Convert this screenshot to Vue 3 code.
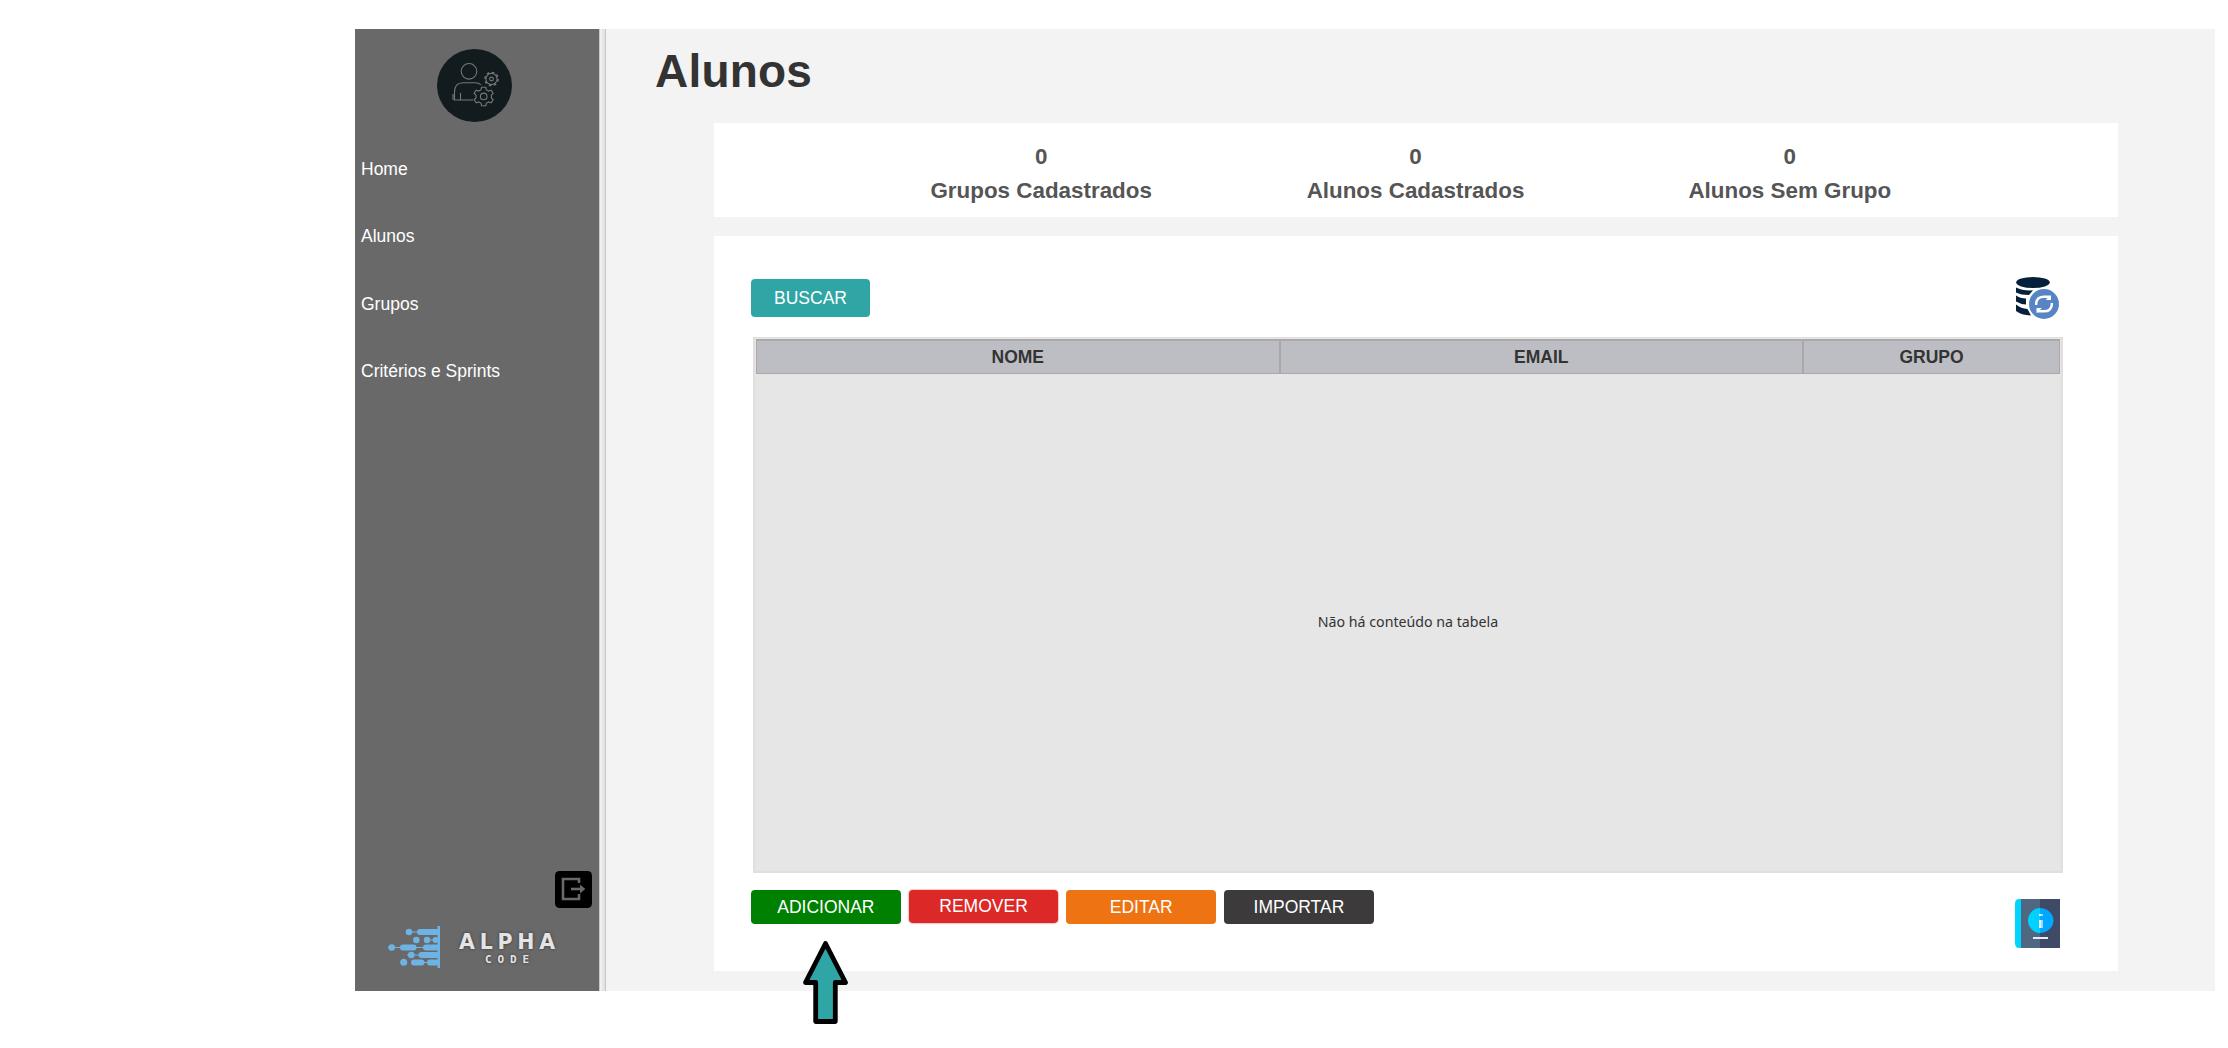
<script setup>
const menu = ['Home', 'Alunos', 'Grupos', 'Critérios e Sprints']
const stats = [
  { value: 0, label: 'Grupos Cadastrados' },
  { value: 0, label: 'Alunos Cadastrados' },
  { value: 0, label: 'Alunos Sem Grupo' },
]
const actions = [
  { label: 'ADICIONAR', kind: 'add' },
  { label: 'REMOVER', kind: 'remove' },
  { label: 'EDITAR', kind: 'edit' },
  { label: 'IMPORTAR', kind: 'import' },
]
</script>

<template>
  <div class="screen">
    <div class="app">
      <aside class="sidebar">
        <svg class="avatar" width="75" height="73" viewBox="0 0 75 73">
          <ellipse cx="37.5" cy="36.5" rx="37.5" ry="36.5" fill="#121b1e" />
          <g fill="none" stroke="#74797a" stroke-width="1.1">
            <circle cx="32" cy="22.3" r="7.8" />
            <path d="M44 36 Q42 33.8 38 33.8 H26 Q17.5 34 17.5 43 V51 H36 M23.5 44 V51 M16 45 V51" />
            <circle cx="54.5" cy="30" r="5.6" />
            <circle cx="54.5" cy="30" r="6.6" stroke-dasharray="2.6 2.6" stroke-width="1.5" />
            <circle cx="54.5" cy="30" r="1.9" />
            <path d="M44.6 38.3h4.2l.6 2.6 2.4 1.2 2.4-1 2 3.3-1.8 1.6v3l1.8 1.6-2 3.3-2.4-1-2.4 1.2-.6 2.6h-4.2l-.7-2.6-2.4-1.2-2.3 1-2.1-3.3 1.9-1.6v-3l-1.9-1.6 2.1-3.3 2.3 1 2.4-1.2z" />
            <circle cx="46.7" cy="47.4" r="3.3" />
          </g>
        </svg>
        <nav class="menu">
          <a v-for="item in menu" :key="item" class="menu-item">{{ item }}</a>
        </nav>
        <svg class="exit" width="37" height="37" viewBox="0 0 37 37">
          <rect width="37" height="37" rx="4.5" />
          <g fill="none" stroke="#696969" stroke-width="2.6">
            <path d="M24 12V8H8V28H24V23" />
            <path d="M16 18H28" />
          </g>
          <path d="M25 13.5L30.3 18L25 22.5Z" fill="#696969" />
        </svg>
        <div class="brand">
          <svg class="brand-mark" width="54" height="44" viewBox="0 0 54 44">
            <g fill="#6db4e4" stroke="#6db4e4">
              <path d="M22 7H50M37 15H50M1 22.5H52M20 30H50M26 37.5H50" stroke-width="1" />
              <rect x="50.5" y="1" width="2.5" height="42" stroke="none" />
              <path d="M33 7H50M16 22.500H26.500M39 22.500H50M34.500 30H50M27 37.500H34.500M43 37.500H50" stroke-width="6" stroke-linecap="round" />
              <g stroke="none">
                <circle cx="22" cy="7" r="3.300" />
                <circle cx="29.300" cy="15" r="3.300" />
                <circle cx="40" cy="15" r="3.200" />
                <circle cx="48.500" cy="15" r="2.900" />
                <circle cx="4.700" cy="22.500" r="3.300" />
                <circle cx="24.300" cy="30" r="3.300" />
                <circle cx="16.700" cy="37.300" r="3.500" />
              </g>
            </g>
          </svg>
          <div class="brand-text">
            <div class="brand-name">ALPHA</div>
            <div class="brand-sub">CODE</div>
          </div>
        </div>
      </aside>
      <div class="splitter"></div>
      <main class="content">
        <h1>Alunos</h1>
        <section class="stats">
          <div v-for="s in stats" :key="s.label" class="stat">
            <div>{{ s.value }}</div>
            <div>{{ s.label }}</div>
          </div>
        </section>
        <section class="panel">
          <div class="toolbar">
            <button class="btn search">BUSCAR</button>
            <svg class="refresh" width="44" height="43" viewBox="0 0 44 43">
              <g fill="#04203b">
                <ellipse cx="17" cy="5.500" rx="16.800" ry="5.500" />
                <path d="M0 10.500Q7 14 17 13.300L13 18Q5 18 0 15.500Z" />
                <path d="M0 18.500Q4 21.500 10 21.500V27.500Q4 27 0 24.500Z" />
                <path d="M0 27.500Q5 31.500 11.500 32L15 38.500Q5 38 0 34Z" />
              </g>
              <circle cx="28" cy="27" r="16" fill="#fff" />
              <circle cx="28" cy="27" r="15" fill="#5785c4" />
              <g fill="none" stroke="#fff" stroke-width="2.400">
                <path d="M20.200 28V26Q21 19.700 28 19.700H34" />
                <path d="M35.800 26V28Q35 34.300 28 34.300H21" />
              </g>
              <path d="M35 18V23H29.500ZM20.500 36V31H26Z" fill="#fff" />
            </svg>
          </div>
          <div class="table">
            <div class="thead">
              <div class="th">NOME</div>
              <div class="th">EMAIL</div>
              <div class="th small">GRUPO</div>
            </div>
            <div class="empty">Não há conteúdo na tabela</div>
          </div>
          <div class="footer">
            <div class="actions">
              <button v-for="a in actions" :key="a.kind" class="btn action" :class="a.kind">{{ a.label }}</button>
            </div>
            <svg class="book" width="45" height="49" viewBox="0 0 45 49">
              <path d="M0 5Q0 0 4 0H6V49H4Q0 49 0 44Z" fill="#00d4ff" />
              <rect x="6" width="19" height="49" fill="#4f6780" />
              <rect x="25" width="20" height="49" fill="#3e4a66" />
              <path d="M25.500 9A12.500 12.500 0 0 0 25.500 34Z" fill="#00d1ff" />
              <path d="M25 9A13.500 12.500 0 0 1 25 34Z" fill="#00a8ff" />
              <path d="M24 15H28V17H24ZM24 21H28V29H24Z" fill="#9fd8ff" />
              <path d="M24 15H26V17H24ZM24 21H26V29H24Z" fill="#e8f8ff" />
              <rect x="18" y="38" width="15" height="2" fill="#e4edff" />
            </svg>
          </div>
        </section>
      </main>
    </div>
    <svg class="pointer" width="47" height="85" viewBox="0 0 47 85">
      <path d="M23.500 3.500L43.500 42.500H33.300V81.500H13.700V42.500H3.500Z" fill="#30a5a6" stroke="#000" stroke-width="4.800" stroke-linejoin="round" />
    </svg>
  </div>
</template>

<style>
body {
  margin: 0;
  background: #fff;
}
</style>

<style scoped>
.screen {
  position: relative;
  box-sizing: border-box;
  width: 2228px;
  height: 1048px;
  padding: 29px 13px 57px 355px;
  background: #fff;
  font-family: "Liberation Sans", Arial, sans-serif;
  overflow: hidden;
}
.app {
  display: flex;
  height: 962px;
  background: #f3f3f3;
}
.sidebar {
  display: flex;
  flex-direction: column;
  width: 244px;
  background: #696969;
}
.avatar {
  margin: 20px 0 0 82px;
}
.menu {
  display: flex;
  flex-direction: column;
  margin-top: 13.500px;
  padding-left: 6px;
}
.menu-item {
  height: 67.500px;
  line-height: 67.500px;
  font-size: 17.500px;
  color: #fff;
}
.exit {
  margin: auto 7px 0 auto;
}
.brand {
  display: flex;
  height: 44px;
  margin: 17px 0 22px 32px;
}
.brand-text {
  width: 110px;
  margin-left: 18px;
  color: #e4e4e4;
  text-shadow: 0 0 3px #333;
}
.brand-name {
  height: 30px;
  font: 700 20.500px/35px "DejaVu Sans", sans-serif;
  letter-spacing: 4.800px;
  white-space: nowrap;
}
.brand-sub {
  margin-left: 26px;
  font: 700 11px/9px "DejaVu Sans Mono", monospace;
  letter-spacing: 5.900px;
}
.splitter {
  box-sizing: border-box;
  width: 7px;
  border-left: 1px solid #c8c8c8;
  border-right: 1px solid #c8c8c8;
  background: linear-gradient(90deg, #f4f4f4, #dedede);
}
.content {
  flex: 1;
  padding-left: 108px;
}
h1 {
  height: 94px;
  margin: 0 0 0 -59px;
  line-height: 84px;
  font-size: 46px;
  letter-spacing: 0.200px;
  color: #333;
}
.stats {
  display: flex;
  box-sizing: border-box;
  width: 1404px;
  height: 94px;
  padding: 17px 141px 0 140px;
  background: #fff;
  color: #555;
  font-weight: 700;
  font-size: 22.400px;
  line-height: 34px;
  text-align: center;
}
.stat {
  flex: 1;
}
.panel {
  box-sizing: border-box;
  width: 1404px;
  height: 735px;
  margin-top: 19px;
  padding: 41px 55px 0 37px;
  background: #fff;
}
.toolbar {
  display: flex;
  justify-content: space-between;
  height: 60px;
}
.btn {
  border: 0;
  padding: 0;
  border-radius: 4px;
  color: #fff;
  font: 17.500px "Liberation Sans", Arial, sans-serif;
}
.search {
  width: 119px;
  height: 38px;
  margin-top: 2px;
  background: #30a5a6;
}
.refresh {
  margin-right: 3px;
}
.table {
  display: flex;
  flex-direction: column;
  box-sizing: border-box;
  width: 1310px;
  height: 536px;
  margin-left: 2px;
  padding: 0 1px;
  border: 2px solid #e2dede;
  border-top-width: 1px;
  background: #e6e6e6;
}
.thead {
  display: flex;
  height: 35px;
  margin-top: 1px;
  box-sizing: border-box;
  border: 1px solid #a9a9a9;
  border-top-width: 2px;
  background: #bdbec4;
}
.th {
  box-sizing: border-box;
  width: 523.500px;
  border-right: 2px solid #a9a9a9;
  text-align: center;
  font-weight: 700;
  font-size: 17.500px;
  line-height: 32px;
  color: #333;
}
.small {
  flex: 1;
  width: auto;
  border-right: 0;
}
.empty {
  flex: 1;
  display: flex;
  align-items: center;
  justify-content: center;
  padding-bottom: 2px;
  font: 14.200px "Noto Sans", sans-serif;
  color: #333;
}
.footer {
  display: flex;
  justify-content: space-between;
}
.actions {
  display: flex;
  gap: 8px;
  margin-top: 17px;
}
.action {
  width: 149.700px;
  height: 34px;
}
.add {
  background: #008000;
}
.remove {
  height: 33px;
  background: #dd2828;
  box-shadow: 0 0 1px 1px #f6c4c4;
}
.edit {
  background: #ee7312;
}
.import {
  background: #3d3a3b;
}
.book {
  margin: 26px 3px 0 0;
}
.pointer {
  position: absolute;
  left: 802px;
  top: 940px;
}
</style>
